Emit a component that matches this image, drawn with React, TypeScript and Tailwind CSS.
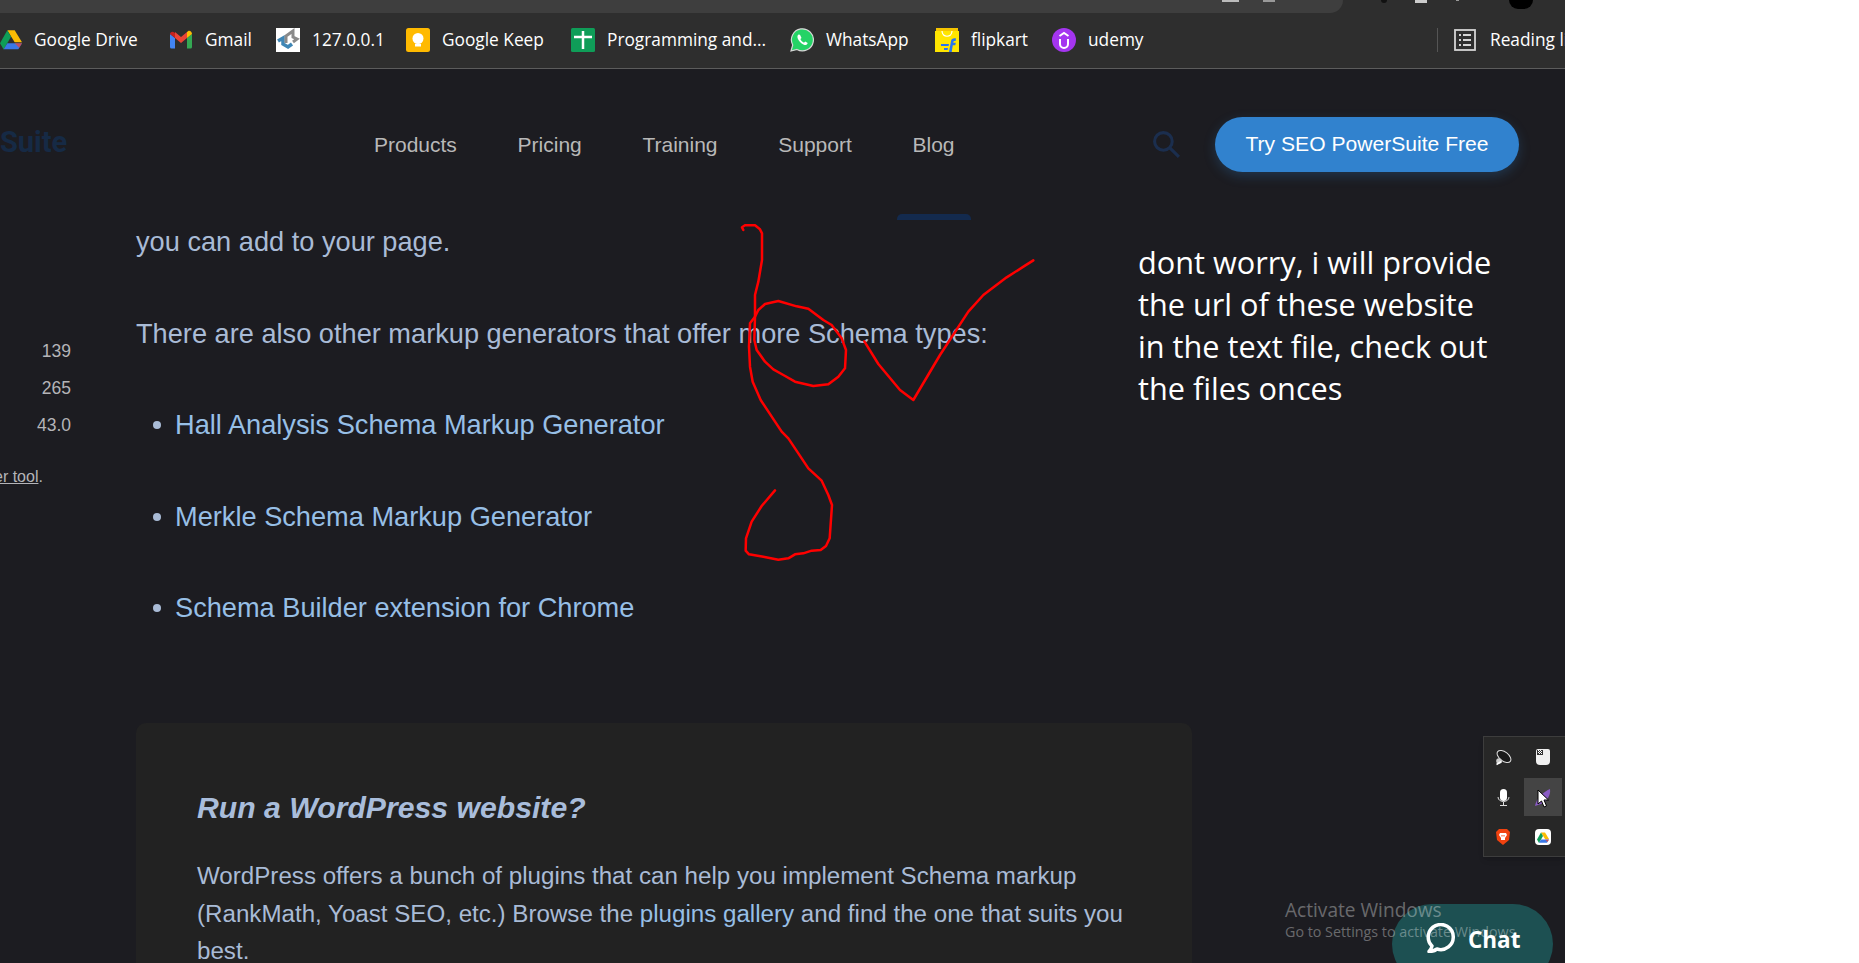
import React from 'react';

const DriveIcon = ({ className }: { className: string }) => (
  <svg className={className} viewBox="0 0 24 22">
    <path d="M8 1h8l8 13h-8z" fill="#fbbc04" />
    <path d="M8 1l4 7-8 14-4-7z" fill="#0f9d58" />
    <path d="M8 15h16l-4 6.500H4z" fill="#3b78e7" />
    <path d="M8 15h8l8 0-3 5-5-5z" fill="#e94235" opacity="0.75" />
  </svg>
);

const GmailIcon = () => (
  <svg className="w-6 h-6" viewBox="0 0 24 24">
    <path d="M1 6v13a1.500 1.500 0 0 0 1.500 1.500H6V10z" fill="#4285f4" />
    <path d="M18 10v10.500h3.500A1.500 1.500 0 0 0 23 19V6z" fill="#34a853" />
    <path d="M6 10V4l6 5 6-5v6l-6 5z" fill="#ea4335" />
    <path d="M1 6c0-2 2.500-3 4-1.800L6 5v5z" fill="#c5221f" />
    <path d="M18 4l1-.800C20.500 2 23 3.500 23 6l-5 4z" fill="#fbbc04" />
  </svg>
);

const LocalIcon = () => (
  <svg className="w-6 h-6" viewBox="0 0 24 24">
    <rect width="24" height="24" fill="#fff" />
    <path d="M2 13l5-3v6l5 3 4-3" fill="none" stroke="#3f86b5" strokeWidth="3.500" />
    <path d="M10 15V8l7-5v6l4 2-4 3" fill="none" stroke="#8a8a8a" strokeWidth="3" />
  </svg>
);

const KeepIcon = () => (
  <svg className="w-6 h-6" viewBox="0 0 24 24">
    <rect width="24" height="24" rx="2.500" fill="#ffba00" />
    <circle cx="12" cy="10.500" r="5.500" fill="#fff" />
    <rect x="9" y="16" width="6" height="2.500" fill="#fff" />
  </svg>
);

const SheetsIcon = () => (
  <svg className="w-6 h-6" viewBox="0 0 24 24">
    <rect width="24" height="24" rx="1.500" fill="#0f9d58" />
    <path d="M3 9h18M12 3v18" stroke="#fff" strokeWidth="2.500" />
  </svg>
);

const WhatsappIcon = () => (
  <svg className="w-6 h-6" viewBox="0 0 24 24">
    <path d="M1 23l1.700-6A11 11 0 1 1 7 21.400z" fill="#25d366" stroke="#d8d8d8" strokeWidth="1.200" />
    <path d="M8.500 6.500c-1.500 1-1.500 3 0 5.500s4 4.500 6 5c1.500.3 3-.6 3.200-2l-2.500-1.500-1.200 1.200c-1.500-.6-3-2.200-3.600-3.700L11.500 10 10 6.800z" fill="#fff" />
  </svg>
);

const FlipkartIcon = () => (
  <svg className="w-6 h-6" viewBox="0 0 24 24">
    <rect y="3" width="24" height="21" fill="#ffe500" />
    <rect x="1" width="22" height="3" fill="#f5c400" />
    <path d="M7 3c0 7 10 7 10 0" fill="none" stroke="#fff" strokeWidth="1.200" />
    <path d="M14 24l2-11c.4-2 2-3 5-2.500L20.600 13c-1.500-.3-2 0-2.200 1l-.1.800h2.500l-.5 2.500h-2.500L16.700 24zM6 16h8l-.5 2H6zM9 20h4l-.4 2H9z" fill="#2874f0" />
  </svg>
);

const UdemyIcon = () => (
  <svg className="w-6 h-6" viewBox="0 0 24 24">
    <circle cx="12" cy="12" r="12" fill="#a435f0" />
    <path d="M8 11v5a4 4 0 0 0 8 0v-5" fill="none" stroke="#fff" strokeWidth="2" />
    <path d="M7.500 8L12 5l4.500 3" fill="none" stroke="#fff" strokeWidth="2" />
  </svg>
);

const ReadingIcon = () => (
  <svg className="w-[22px] h-[22px] shrink-0" viewBox="0 0 22 22" fill="none" stroke="#d4d4d4">
    <rect x="1" y="1" width="20" height="20" strokeWidth="1.800" />
    <path d="M5 6h2M5 11h2M5 16h2M9 6h8M9 11h8M9 16h8" strokeWidth="1.800" />
  </svg>
);

const bookmarks = [
  { label: 'Google Drive', width: 'w-[110px]', icon: <DriveIcon className="w-[22px] h-[21px]" /> },
  { label: 'Gmail', width: 'w-[46px]', icon: <GmailIcon /> },
  { label: '127.0.0.1', width: 'w-[69px]', icon: <LocalIcon /> },
  { label: 'Google Keep', width: 'w-[104px]', icon: <KeepIcon /> },
  { label: 'Programming and...', width: 'w-[158px]', icon: <SheetsIcon /> },
  { label: 'WhatsApp', width: 'w-[84px]', icon: <WhatsappIcon /> },
  { label: 'flipkart', width: 'w-[56px]', icon: <FlipkartIcon /> },
  { label: 'udemy', width: 'w-[55px]', icon: <UdemyIcon /> },
];

const navLinks = ['Products', 'Pricing', 'Training', 'Support', 'Blog'];
const stats = ['139', '265', '43.0'];
const schemaTools = [
  'Hall Analysis Schema Markup Generator',
  'Merkle Schema Markup Generator',
  'Schema Builder extension for Chrome',
];

function TrayPopup() {
  return (
    <div className="absolute right-0 top-[736px] w-[82px] h-[121px] bg-[#272727] border border-r-0 border-[#3d3d3d] grid grid-cols-[38px_38px] grid-rows-[38px_38px_38px] gap-x-[2px] pt-[3px] shadow-md">
      <div className="flex items-center justify-center pb-[4px]">
        <svg className="w-[17px] h-[17px]" viewBox="0 0 17 17">
          <ellipse cx="9" cy="7.500" rx="8" ry="4.500" transform="rotate(38 9 7.500)" fill="#1a1a1a" stroke="#dddddd" strokeWidth="1" />
          <circle cx="4" cy="12" r="2.800" fill="#cccccc" />
          <path d="M1.500 15.500l5-3" stroke="#ffffff" strokeWidth="1.500" />
        </svg>
      </div>
      <div className="flex items-center justify-center pb-[4px]">
        <svg className="w-[14px] h-[16px]" viewBox="0 0 14 16">
          <path d="M0 2a2 2 0 0 1 2-2h10a2 2 0 0 1 2 2v10a4 4 0 0 1-4 4H4a4 4 0 0 1-4-4z" fill="#f0f0f0" />
          <rect x="1" y="1" width="6" height="5" fill="#333" />
          <path d="M2 1h1v1H2zM4 1h1v1H4zM3 2h1v1H3zM5 2h1v1H5zM2 3h1v1H2zM4 3h1v1H4zM3 4h1v1H3zM5 4h1v1H5z" fill="#fff" />
        </svg>
      </div>
      <div className="flex items-center justify-center">
        <svg className="w-[13px] h-[17px]" viewBox="0 0 13 17">
          <rect x="3" y="0" width="7" height="12" rx="3.500" fill="#fff" />
          <path d="M1 8c0 6 11 6 11 0M6.500 13v3M3 16.500h7" fill="none" stroke="#ddd" strokeWidth="1" />
        </svg>
      </div>
      <div className="flex items-center justify-center bg-[#444444] relative">
        <svg className="w-[16px] h-[17px]" viewBox="0 0 16 17">
          <path d="M15 0c1 6-3 12-9 15l-6 2c1-7 8-14 15-17z" fill="#8a5cc4" />
        </svg>
        <svg className="absolute left-[13px] top-[11px] w-[13px] h-[19px]" viewBox="0 0 13 19">
          <path d="M1 1v14l3.500-3 2.500 6 2.500-1-2.500-6h4.500z" fill="#fff" stroke="#000" strokeWidth="1" />
        </svg>
      </div>
      <div className="flex items-center justify-center pt-[4px]">
        <svg className="w-[14px] h-[16px]" viewBox="0 0 14 16">
          <path d="M3 0h8l3 3-1 8-6 5-6-5-1-8z" fill="#f1420f" />
          <path d="M4 4h6l1 2-2 3v2H5V9L3 6z" fill="#fff" />
          <path d="M5.500 6h1v1.500h-1zM7.500 6h1v1.500h-1z" fill="#f1420f" />
        </svg>
      </div>
      <div className="flex items-center justify-center pt-[4px]">
        <div className="w-4 h-4 bg-white rounded-sm flex items-center justify-center">
          <DriveIcon className="w-[12px] h-[11px]" />
        </div>
      </div>
    </div>
  );
}

export default function App() {
  return (
    <div className="flex w-[1859px] h-[963px] overflow-hidden bg-white font-['Liberation_Sans',sans-serif]">
      <div className="relative w-[1565px] h-full flex flex-col overflow-hidden bg-[#1c1c21]">
        {/* browser chrome */}
        <div className="h-[13px] shrink-0 flex bg-[#2e2e2e]">
          <div className="w-[1343px] h-full bg-[#3e3e3e] rounded-br-[13px] flex justify-end pr-[68px]">
            <div className="w-[17px] h-[2px] bg-[#bbbbbb]" />
            <div className="w-[12px] h-[2px] ml-[24px] bg-[#999999]" />
          </div>
          <div className="flex-1 flex items-start pl-[38px]">
            <div className="w-[6px] h-[3px] bg-[#111111] rounded-b-full" />
            <div className="w-[12px] h-[3px] ml-[28px] bg-[#cccccc]" />
            <div className="w-[3px] h-[1px] ml-[29px] bg-[#999999]" />
            <div className="w-[24px] h-[9px] ml-[50px] bg-black rounded-b-full" />
          </div>
        </div>
        <div className="h-[56px] shrink-0 flex items-center pb-[2px] bg-[#2e2e2e] border-b border-[#5c5c5c] font-['Open_Sans',sans-serif] text-[17.3px] text-white">
          <div className="flex items-center gap-[25px]">
            {bookmarks.map((b) => (
              <div key={b.label} className="flex items-center gap-[12px] whitespace-nowrap">
                {b.icon}
                <span className={b.width}>{b.label}</span>
              </div>
            ))}
          </div>
          <div className="ml-auto flex items-center whitespace-nowrap w-[128px] overflow-hidden">
            <div className="w-px h-6 bg-[#555555] mr-[16px] shrink-0" />
            <ReadingIcon />
            <span className="ml-[14px]">Reading list</span>
          </div>
        </div>

        {/* site header */}
        <header className="h-[151px] shrink-0 flex items-center relative">
          <div className="w-[374px] -mt-[3px] overflow-hidden">
            <span className="block font-['Roboto',sans-serif] font-bold text-[29px] text-[#162a45]">Suite</span>
          </div>
          <nav className="flex items-center gap-[60.7px] text-[21px] text-[#b8b8b8]">
            {navLinks.map((l) => (
              <a key={l}>{l}</a>
            ))}
          </nav>
          <svg className="ml-auto w-[29px] h-[29px]" viewBox="0 0 28 28" fill="none" stroke="#1b2e4e" strokeWidth="3">
            <circle cx="11" cy="11" r="8.500" />
            <path d="M17 17l9 9" />
          </svg>
          <button className="ml-[34px] mr-[46px] w-[304px] h-[55px] pb-[1px] rounded-full bg-[#3182ce] text-white text-[21.1px] shadow-[0_4px_12px_rgba(49,130,206,0.25)]">
            Try SEO PowerSuite Free
          </button>
          <div className="absolute left-[897px] bottom-0 w-[74px] h-[6px] bg-[#132a4e] rounded-t-[5px]" />
        </header>

        {/* page body */}
        <main className="flex flex-1 min-h-0">
          <aside className="w-[136px] shrink-0 pr-[65px] pt-[113px] text-[17.5px] text-[#b4b4b8] text-right">
            {stats.map((s) => (
              <div key={s} className="h-[37px] leading-[37px]">{s}</div>
            ))}
            <p className="mt-[21px] -mr-[65px] whitespace-nowrap text-[16px] text-left">
              <span className="-ml-[6px] underline">er tool</span>.
            </p>
          </aside>
          <article className="w-[1056px] shrink-0 pt-[2px] text-[27.2px] text-[#a9bbd6]">
            <p className="leading-[40px]">you can add to your page.</p>
            <p className="mt-[52px] leading-[40px]">There are also other markup generators that offer more Schema types:</p>
            <ul className="mt-[51px] flex flex-col gap-[51.5px] text-[#97bfe6]">
              {schemaTools.map((t) => (
                <li key={t} className="flex items-center leading-[40px]">
                  <span className="w-[8px] h-[8px] rounded-full bg-[#a9bbd6] ml-[17px] mr-[14px]" />
                  {t}
                </li>
              ))}
            </ul>
            <section className="mt-[95px] bg-[#222222] rounded-[10px] pt-[66px] pl-[61px] pr-[60px] h-[300px]">
              <h3 className="text-[30.2px] leading-[38px] font-bold italic text-[#a9bddb]">Run a WordPress website?</h3>
              <p className="mt-[30px] text-[24.15px] leading-[37.5px]">
                WordPress offers a bunch of plugins that can help you implement Schema markup (RankMath, Yoast SEO, etc.) Browse the{' '}
                <span className="text-[#97bfe6]">plugins gallery</span> and find the one that suits you best.
              </p>
            </section>
          </article>
        </main>

        {/* pen scribbles drawn over the screenshot */}
        <svg className="absolute left-[700px] top-[200px] w-[400px] h-[380px]" viewBox="0 0 1200 1140" fill="none" stroke="#ff0000" strokeWidth="7.500" strokeLinejoin="round" strokeLinecap="round">
          <path d="M130 90L126 82L135 76L165 76L180 88L186 100L186 180L175 245L165 285L165 350L150 370L147 440L150 500L158 545L182 600L245 695L265 715L325 805L365 842L385 885L396 915L389 1015L378 1038L362 1050L335 1052L310 1060L285 1063L265 1075L235 1079L190 1070L147 1063L137 1052L138 1015L155 965L185 918L225 871" />
          <path d="M165 350L175 330L195 312L235 303L290 319L325 326L370 360L395 375L425 415L438 450L435 505L415 530L385 553L340 558L285 545L250 525L220 508L195 485L170 450L163 420L165 350" />
          <path d="M493 424L535 492L600 570L640 600L720 465L805 335L850 285L920 232L975 197L1000 181" />
        </svg>

        <p className="absolute left-[1138px] top-[241px] w-[420px] font-['Open_Sans',sans-serif] text-[30.7px] leading-[42px] text-white">
          dont worry, i will provide<br />the url of these website<br />in the text file, check out<br />the files onces
        </p>

        <TrayPopup />

        <div className="absolute left-[1392px] top-[904px] w-[161px] h-[80px] rounded-[40px] bg-[#1d5052] flex items-start pt-[19px] pl-[34px] gap-[13px]">
          <svg className="w-[29px] h-[30px]" viewBox="0 0 29 30" fill="none" stroke="#fff" strokeWidth="3.500">
            <path d="M6 23a12.500 12.500 0 1 1 5 3c-2 1.500-5 2.500-8 2.500 1.500-1.500 2.500-3 3-5.500z" strokeLinejoin="round" />
          </svg>
          <span className="mt-[1px] font-['Open_Sans',sans-serif] font-bold text-[22.5px] leading-[32px] text-white">Chat</span>
        </div>

        <div className="absolute left-[1285px] top-[898px] font-['Open_Sans',sans-serif] text-white/35 whitespace-nowrap">
          <div className="text-[19.1px] leading-[24px]">Activate Windows</div>
          <div className="text-[14.3px] leading-[20px]">Go to Settings to activate Windows.</div>
        </div>
      </div>
      <div className="flex-1 bg-white" />
    </div>
  );
}
